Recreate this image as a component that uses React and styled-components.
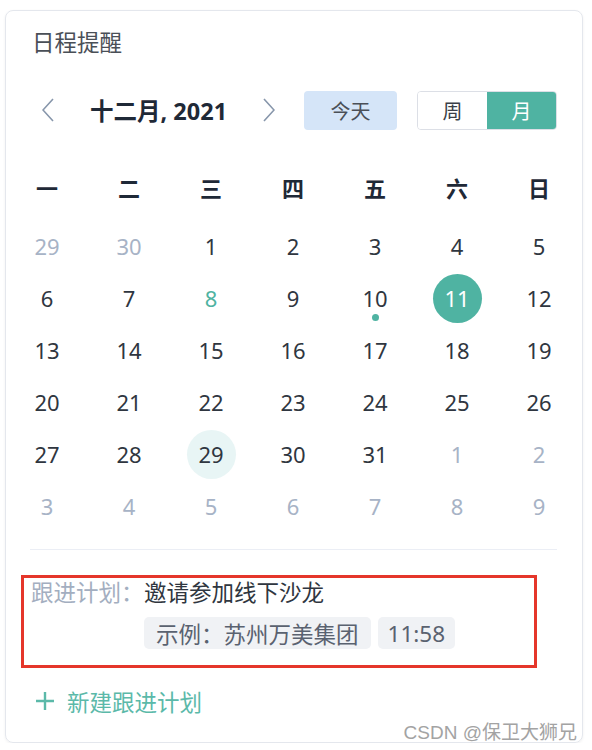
import React from 'react';
import styled, { createGlobalStyle } from 'styled-components';

const GlobalStyle = createGlobalStyle`
  body {
    margin: 0;
    background: #fff;
    font-family: "Noto Sans", "Noto Sans CJK SC", sans-serif;
  }
`;

const TEAL = '#4fb3a2';

const Page = styled.div`
  padding: 10px 0 0 5px;
`;

const Card = styled.div`
  position: relative;
  width: 578px;
  height: 733px;
  box-sizing: border-box;
  border: 1px solid #e4e7ed;
  border-radius: 8px;
  box-shadow: 0 1px 3px rgba(0, 0, 0, 0.06);
`;

const Title = styled.div`
  margin: 20px 0 0 26px;
  font-size: 22.5px;
  line-height: 24px;
  color: #4a4f57;
`;

const NavRow = styled.div`
  display: flex;
  align-items: center;
  height: 40px;
  margin-top: 35px;
  padding-left: 36px;
`;

const Chevron = styled.svg`
  width: 12px;
  height: 24px;
  flex-shrink: 0;
  margin-left: ${(p) => p.$gap || 0}px;
`;

const MonthTitle = styled.div`
  margin-left: 36px;
  font-size: 23.5px;
  font-weight: 700;
  color: #1f2937;
  white-space: nowrap;
`;

const TodayButton = styled.button`
  margin-left: 29px;
  width: 93px;
  height: 39px;
  border: none;
  border-radius: 4px;
  background: #d5e5f8;
  color: #4a4f57;
  font-family: inherit;
  font-size: 20px;
  cursor: pointer;
`;

const Segment = styled.div`
  display: flex;
  margin-left: 20px;
  width: 140px;
  height: 39px;
  box-sizing: border-box;
  border: 1px solid #dcdfe6;
  border-radius: 4px;
  overflow: hidden;
`;

const SegmentButton = styled.button`
  flex: 1;
  border: none;
  background: ${(p) => (p.$active ? TEAL : '#fff')};
  color: ${(p) => (p.$active ? '#fff' : '#3a3f47')};
  font-family: inherit;
  font-size: 20px;
  cursor: pointer;
`;

const Grid = styled.div`
  display: grid;
  grid-template-columns: repeat(7, 82px);
  grid-auto-rows: 52px;
`;

const WeekHead = styled(Grid)`
  margin-top: 31px;
`;

const DaysGrid = styled(Grid)`
  margin-top: 7px;
`;

const WeekCell = styled.div`
  display: flex;
  align-items: center;
  justify-content: center;
  font-size: 22px;
  font-weight: 700;
  color: #1f2937;
`;

const DayCell = styled.div`
  position: relative;
  display: flex;
  align-items: center;
  justify-content: center;
`;

const dayBg = { selected: TEAL, today: '#e8f5f5' };
const dayColor = { muted: '#a7b3c6', marked: TEAL, selected: '#fff' };

const DayNumber = styled.span`
  display: flex;
  align-items: center;
  justify-content: center;
  width: 49px;
  height: 49px;
  border-radius: 50%;
  background: ${(p) => dayBg[p.$kind] || 'transparent'};
  color: ${(p) => dayColor[p.$kind] || '#2f3640'};
  font-size: 22px;
`;

const EventDot = styled.span`
  position: absolute;
  left: 50%;
  top: 42px;
  width: 7px;
  height: 7px;
  margin-left: -3.5px;
  border-radius: 50%;
  background: ${TEAL};
`;

const Divider = styled.div`
  height: 1px;
  margin: 17px 25px 0 24px;
  background: #ebeef5;
`;

const PlanBox = styled.div`
  width: 516px;
  box-sizing: border-box;
  margin: 25px 0 0 15px;
  padding: 2px 8px 16px 7px;
  border: 3px solid #e5362a;
`;

const PlanLine = styled.div`
  display: flex;
  font-size: 22.5px;
  line-height: 26px;
`;

const PlanLabel = styled.span`
  width: 113px;
  color: #a3aec0;
  white-space: nowrap;
`;

const PlanValue = styled.span`
  color: #2f3640;
`;

const TagRow = styled.div`
  display: flex;
  gap: 7px;
  margin: 11px 0 0 113px;
`;

const Tag = styled.span`
  height: 32px;
  padding: 0 ${(p) => p.$pad || 12}px;
  display: flex;
  align-items: center;
  border-radius: 5px;
  background: #f0f2f5;
  color: #5a6270;
  font-size: 22.5px;
  white-space: nowrap;
`;

const AddLink = styled.div`
  display: flex;
  align-items: center;
  gap: 12px;
  margin: 20px 0 0 29px;
  height: 26px;
  color: #5bb9a9;
  font-size: 22.5px;
  cursor: pointer;
`;

const Watermark = styled.div`
  position: absolute;
  right: 5px;
  bottom: -2px;
  font-family: "Liberation Sans", "Noto Sans CJK SC", sans-serif;
  font-size: 19px;
  line-height: 22px;
  color: #a3a3a3;
`;

const weekdays = ['一', '二', '三', '四', '五', '六', '日'];

const days = [
  [29, 'muted'], [30, 'muted'], [1], [2], [3], [4], [5],
  [6], [7], [8, 'marked'], [9], [10, null, true], [11, 'selected'], [12],
  [13], [14], [15], [16], [17], [18], [19],
  [20], [21], [22], [23], [24], [25], [26],
  [27], [28], [29, 'today'], [30], [31], [1, 'muted'], [2, 'muted'],
  [3, 'muted'], [4, 'muted'], [5, 'muted'], [6, 'muted'], [7, 'muted'], [8, 'muted'], [9, 'muted'],
];

function App() {
  return (
    <Page>
      <GlobalStyle />
      <Card>
        <Title>日程提醒</Title>
        <NavRow>
          <Chevron viewBox="0 0 12 24">
            <polyline points="11,1 1,12 11,23" fill="none" stroke="#8796ab" strokeWidth="1.6" />
          </Chevron>
          <MonthTitle>十二月, 2021</MonthTitle>
          <Chevron viewBox="0 0 12 24" $gap={36}>
            <polyline points="1,1 11,12 1,23" fill="none" stroke="#8796ab" strokeWidth="1.6" />
          </Chevron>
          <TodayButton>今天</TodayButton>
          <Segment>
            <SegmentButton>周</SegmentButton>
            <SegmentButton $active>月</SegmentButton>
          </Segment>
        </NavRow>

        <WeekHead>
          {weekdays.map((w) => (
            <WeekCell key={w}>{w}</WeekCell>
          ))}
        </WeekHead>
        <DaysGrid>
          {days.map(([n, kind, dot], i) => (
            <DayCell key={i}>
              <DayNumber $kind={kind}>{n}</DayNumber>
              {dot && <EventDot />}
            </DayCell>
          ))}
        </DaysGrid>

        <Divider />

        <PlanBox>
          <PlanLine>
            <PlanLabel>跟进计划：</PlanLabel>
            <PlanValue>邀请参加线下沙龙</PlanValue>
          </PlanLine>
          <TagRow>
            <Tag>示例：苏州万美集团</Tag>
            <Tag $pad={10}>11:58</Tag>
          </TagRow>
        </PlanBox>

        <AddLink>
          <svg width="20" height="20" viewBox="0 0 20 20">
            <path d="M10 1v18M1 10h18" stroke="#5bb9a9" strokeWidth="2.4" fill="none" />
          </svg>
          新建跟进计划
        </AddLink>

        <Watermark>CSDN @保卫大狮兄</Watermark>
      </Card>
    </Page>
  );
}

export default App;
